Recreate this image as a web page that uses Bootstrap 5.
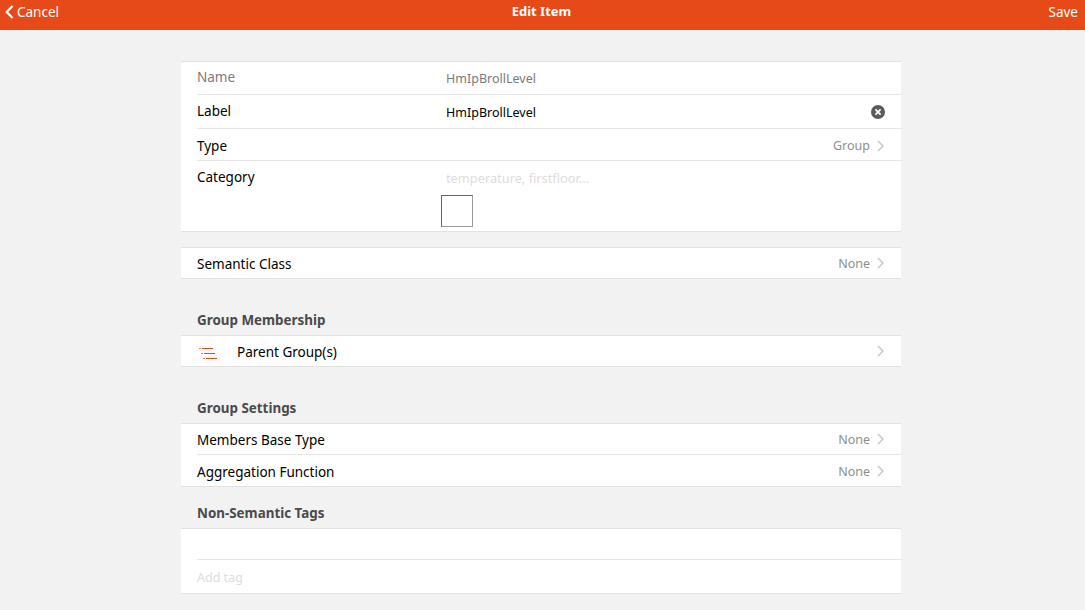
<!DOCTYPE html>
<html lang="en">
<head>
<meta charset="utf-8">
<title>Edit Item</title>
<link href="https://cdn.jsdelivr.net/npm/bootstrap@5.3.0/dist/css/bootstrap.min.css" rel="stylesheet">
<style>
html,body{height:610px;overflow:hidden}
body{background:#f2f2f2;font-family:"Noto Sans","Open Sans",sans-serif;font-size:13.5px;color:#000;line-height:1.2}
.topbar{height:30px;background:#e64a19;color:#fff;padding:0 7px 6px 5px}
.topbar-side{width:200px}
.topbar-title{font-weight:700;font-size:13px}
.cancel-text{margin-left:3px}
.sheet{width:720px;margin-left:181px}
.block{background:#fff;border-top:1px solid #e2e2e2;border-bottom:1px solid #e2e2e2}
.first-block{margin-top:31px}
.sem{margin-top:15px}
.line{height:30px;padding:0 16px}
.inset{border-bottom:1px solid #e6e6e6;margin-left:16px;padding-left:0;height:31px}
.row-a{height:33px;padding-bottom:2px}
.row-b{height:34px}
.row-c{height:32px;padding-top:2px}
.line-agg{height:31px}
.addtag{height:33px;padding-top:2px}
.fieldname{width:249px;flex:none}
.shift1{padding-top:2px}
.shift2{padding-top:4px}
.muted-name{color:#7a7a7a}
.val{font-size:12.5px}
.row-a .val{padding-top:2px}
.row-b .val{padding-top:2px}
.hint{color:#e0dcdc;font-size:12.8px}
.addtag .hint{font-size:12.5px}
.side{color:#8e8e93;font-size:12.5px}
.heading{font-weight:700;color:#4a4a4a;font-size:13.4px;padding-left:16px;margin:0;display:flex;align-items:flex-end;padding-bottom:7px}
.h-a{height:56px}
.h-b{height:41px}
.cat{height:70px;padding:0 16px}
.cat-top{height:33px}
.cat-top .hint{padding-top:2px}
.swatch{width:32px;height:32px;border:1px solid #666;border-right-color:#999;border-bottom-color:#999;margin:1px 0 0 244px}
.chev{margin-left:7px;flex:none}
.clearbtn{flex:none}
.listico{margin-right:18px;margin-left:2px;flex:none}
.parent{flex:none}
</style>
</head>
<body>
<header class="topbar d-flex align-items-center justify-content-between">
  <div class="topbar-side d-flex align-items-center">
    <svg width="9" height="14" viewBox="0 0 9 14"><path d="M7.5 1 1.7 7l5.8 6" fill="none" stroke="#fff" stroke-width="2.2"/></svg>
    <span class="cancel-text">Cancel</span>
  </div>
  <div class="topbar-title">Edit Item</div>
  <div class="topbar-side text-end">Save</div>
</header>
<main class="sheet">
  <section class="block first-block">
    <div class="line inset d-flex align-items-center row-a"><span class="fieldname muted-name">Name</span><span class="val muted-name">HmIpBrollLevel</span></div>
    <div class="line inset d-flex align-items-center row-b"><span class="fieldname">Label</span><span class="val flex-grow-1">HmIpBrollLevel</span>
      <svg class="clearbtn" width="14" height="14" viewBox="0 0 14 14"><circle cx="7" cy="7" r="7" fill="#5b5b5f"/><path d="M4.4 4.4l5.2 5.2M9.6 4.4l-5.2 5.2" stroke="#fff" stroke-width="1.8"/></svg></div>
    <div class="line inset d-flex align-items-center row-c"><span class="fieldname shift1">Type</span><span class="side ms-auto">Group</span>
      <svg class="chev" width="8" height="12" viewBox="0 0 8 12"><path d="M1 1l5 5-5 5" fill="none" stroke="#c7c7cc" stroke-width="1.5"/></svg></div>
    <div class="cat">
      <div class="d-flex align-items-center cat-top"><span class="fieldname">Category</span><span class="hint">temperature, firstfloor...</span></div>
      <div class="swatch"></div>
    </div>
  </section>
  <section class="block sem">
    <div class="line d-flex align-items-center"><span class="fieldname shift1">Semantic Class</span><span class="side ms-auto">None</span>
      <svg class="chev" width="8" height="12" viewBox="0 0 8 12"><path d="M1 1l5 5-5 5" fill="none" stroke="#c7c7cc" stroke-width="1.5"/></svg></div>
  </section>
  <h2 class="heading h-a">Group Membership</h2>
  <section class="block">
    <div class="line d-flex align-items-center">
      <svg class="listico" width="20" height="16" viewBox="0 0 20 16"><g stroke="#e64a19" stroke-width="1" fill="none"><path d="M3 5.5h11M5 10.5h11M7 15.5h11"/><path d="M0 5.5h2M2 10.5h2M4 15.5h2" stroke-opacity=".75"/></g></svg>
      <span class="parent shift1">Parent Group(s)</span>
      <svg class="chev ms-auto" width="8" height="12" viewBox="0 0 8 12"><path d="M1 1l5 5-5 5" fill="none" stroke="#c7c7cc" stroke-width="1.5"/></svg>
    </div>
  </section>
  <h2 class="heading h-a">Group Settings</h2>
  <section class="block">
    <div class="line inset d-flex align-items-center"><span class="fieldname shift1">Members Base Type</span><span class="side ms-auto">None</span>
      <svg class="chev" width="8" height="12" viewBox="0 0 8 12"><path d="M1 1l5 5-5 5" fill="none" stroke="#c7c7cc" stroke-width="1.5"/></svg></div>
    <div class="line line-agg d-flex align-items-center"><span class="fieldname shift2">Aggregation Function</span><span class="side ms-auto shift1">None</span>
      <svg class="chev" width="8" height="12" viewBox="0 0 8 12"><path d="M1 1l5 5-5 5" fill="none" stroke="#c7c7cc" stroke-width="1.5"/></svg></div>
  </section>
  <h2 class="heading h-b">Non-Semantic Tags</h2>
  <section class="block">
    <div class="line inset"></div>
    <div class="line d-flex align-items-center addtag"><span class="hint">Add tag</span></div>
  </section>
</main>
<script src="https://cdn.jsdelivr.net/npm/bootstrap@5.3.0/dist/js/bootstrap.bundle.min.js"></script>
</body>
</html>
